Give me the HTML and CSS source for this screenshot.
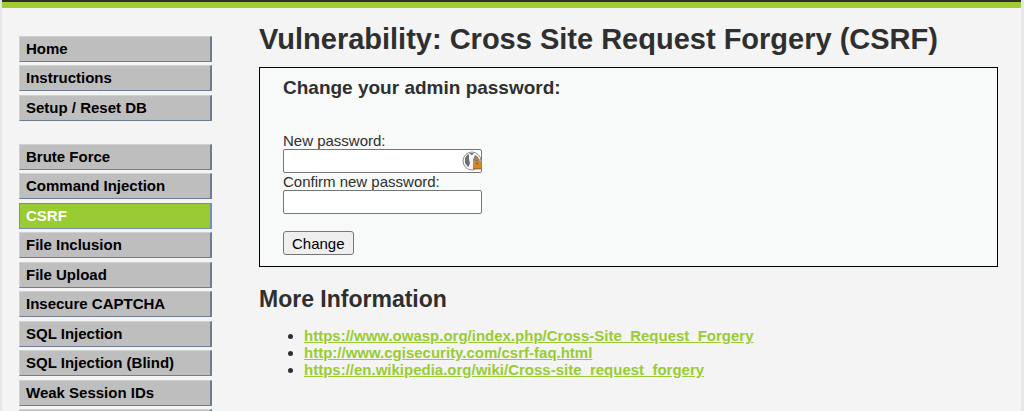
FILE: index.html
```html
<!DOCTYPE html>
<html lang="en">
<head>
<meta charset="utf-8">
<meta name="viewport" content="width=device-width, initial-scale=1">
<title>Vulnerability: Cross Site Request Forgery (CSRF)</title>
<link rel="stylesheet" href="styles.css">
</head>
<body>
<div class="page">
  <header class="header"></header>
  <div class="layout">
    <nav class="menu" aria-label="Main">
      <ul class="menu-group">
        <li><a href="#home">Home</a></li>
        <li><a href="#instructions">Instructions</a></li>
        <li><a href="#setup">Setup / Reset DB</a></li>
      </ul>
      <ul class="menu-group">
        <li><a href="#brute">Brute Force</a></li>
        <li><a href="#exec">Command Injection</a></li>
        <li><a class="selected" href="#csrf" aria-current="page">CSRF</a></li>
        <li><a href="#fi">File Inclusion</a></li>
        <li><a href="#upload">File Upload</a></li>
        <li><a href="#captcha">Insecure CAPTCHA</a></li>
        <li><a href="#sqli">SQL Injection</a></li>
        <li><a href="#sqli-blind">SQL Injection (Blind)</a></li>
        <li><a href="#weak-id">Weak Session IDs</a></li>
        <li><a href="#more" aria-label="More"></a></li>
      </ul>
    </nav>
    <main class="content">
      <h1>Vulnerability: Cross Site Request Forgery (CSRF)</h1>
      <section class="panel">
        <h3>Change your admin password:</h3>
        <form class="form">
          <label for="new">New password:</label>
          <div class="field">
            <input type="password" id="new" name="new" autocomplete="off">
            <svg class="key" viewBox="0 0 20 20" aria-hidden="true">
              <circle cx="10" cy="10" r="9" fill="#f8f8f8" stroke="#8c8c8c" stroke-width="1"/>
              <path d="M3 7L6 3l1 1v5l1 3-1 3-1 1-3-4z" fill="#6f6f6f"/>
              <path d="M7 2h5l-2 2.500z" fill="#777"/>
              <path d="M13 4l3 2 1 4h-4l-1 2-1-3z" fill="#777"/>
              <path d="M13 11V9.500a2 2 0 0 1 4 0V11" fill="none" stroke="#b88a4a" stroke-width="1.500"/>
              <rect x="11" y="10" width="8.500" height="8.500" rx="1" fill="#d08a2a"/>
              <path d="M11 17.500h8.500" stroke="#b06f1f"/>
              <circle cx="15" cy="12.500" r="1" fill="#925b18"/>
            </svg>
          </div>
          <label for="confirm">Confirm new password:</label>
          <div class="field">
            <input type="password" id="confirm" name="confirm" autocomplete="off">
          </div>
          <button type="button">Change</button>
        </form>
      </section>
      <h2>More Information</h2>
      <ul class="links">
        <li><a href="https://www.owasp.org/index.php/Cross-Site_Request_Forgery">https://www.owasp.org/index.php/Cross-Site_Request_Forgery</a></li>
        <li><a href="http://www.cgisecurity.com/csrf-faq.html">http://www.cgisecurity.com/csrf-faq.html</a></li>
        <li><a href="https://en.wikipedia.org/wiki/Cross-site_request_forgery">https://en.wikipedia.org/wiki/Cross-site_request_forgery</a></li>
      </ul>
    </main>
  </div>
</div>
</body>
</html>
```
FILE: styles.css
```css
* { box-sizing: border-box; }
html { overflow: hidden; }
body {
  margin: 0;
  background: #e7e7e7;
  color: #2f2f2f;
  font: 15px/17px "Liberation Sans", Arial, sans-serif;
}
ul { margin: 0; padding: 0; }
.page {
  min-height: 100vh;
  margin: 0 3px 0 2px;
  background: #f4f4f4;
}
.header {
  height: 8px;
  background: #2f2f2f;
  border-bottom: 6px solid #a1cc33;
}
.layout {
  display: flex;
  gap: 47px;
  padding: 13px 23px 0 17px;
}
.menu {
  display: flex;
  flex: 0 0 193px;
  flex-direction: column;
  gap: 20px;
  padding-top: 15px;
}
.menu-group { list-style: none; }
.menu-group li { margin-bottom: 3px; }
.menu-group li:nth-child(even) { margin-bottom: 4px; }
.menu-group a {
  display: block;
  height: 26px;
  padding: 0 6px;
  border: 1px solid;
  border-color: #d0d0d0 #6e7b91 #6e7b91 #d0d0d0;
  border-right-width: 2px;
  background: #bebebe;
  color: #000;
  font-weight: bold;
  line-height: 23px;
  text-decoration: none;
}
.menu-group .selected {
  border-color: #728eb5;
  background: #99cc33;
  color: #fff;
}
.content { flex: 1; min-width: 0; }
h1, h2, h3 { margin: 0; }
h1 { font-size: 29px; line-height: 36px; }
.panel {
  margin-top: 10px;
  padding: 9px 23px 11px;
  border: 1px solid #000;
  background: #f8faf9;
}
h3 { font-size: 19px; line-height: 22px; }
.form {
  display: flex;
  flex-direction: column;
  align-items: flex-start;
  margin-top: 33px;
}
.field { position: relative; width: 199px; }
input {
  display: block;
  width: 100%;
  height: 24px;
  padding: 1px 24px 1px 2px;
  border: 1px solid #767676;
  border-radius: 2px;
  background: #fff;
  font: inherit;
}
.key {
  position: absolute;
  top: 2px;
  right: 0;
  width: 20px;
  height: 20px;
}
button {
  height: 24px;
  margin-top: 17px;
  padding: 0 8px;
  border: 1px solid #767676;
  border-radius: 3px;
  background: #efefef;
  color: #000;
  font: inherit;
  line-height: 21px;
}
h2 { margin-top: 18px; font-size: 23px; line-height: 28px; }
.links { margin-top: 14px; padding-left: 45px; }
.links a { color: #99cc33; font-weight: bold; }
```
